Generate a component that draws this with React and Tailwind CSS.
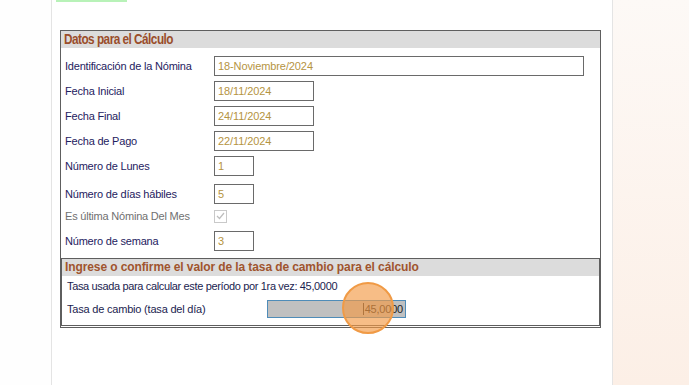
const labelCls = "w-[149px] shrink-0 text-[11px] text-[#1e2160] tracking-[-0.2px]";
const boxCls =
  "h-[20px] border border-[#6a6a6a] bg-white pl-[3px] text-[11px] leading-[18px] text-[#b5943f] tracking-[-0.1px]";

const Row = ({ label, value, width, mt }) => (
  <div className={`flex items-center h-[20px] ${mt}`}>
    <span className={labelCls}>{label}</span>
    <div className={`${boxCls} ${width}`}>{value}</div>
  </div>
);

export default function App() {
  return (
    <div className="relative flex w-[689px] h-[385px] overflow-hidden bg-white font-['Liberation_Sans',Arial,sans-serif]">
      {/* margen izquierdo */}
      <div className="w-[51px] shrink-0 bg-[#fefefe]" />

      {/* panel principal */}
      <div className="w-[562px] shrink-0 border-x border-[#e4e4e4] bg-white">
        <div className="ml-[4px] w-[71px] h-[2px] bg-[#b8f2b8]" />

        <div className="mt-[28px] ml-[8px] w-[541px] border border-[#5e5e5e]">
          <div className="h-[17px] bg-[#dcdcdc] pl-[3px] text-[14px] font-bold leading-[17px] text-[#9a4d2a]">
            <span className="inline-block origin-left scale-x-[0.84] tracking-[-0.6px]">
              Datos para el Cálculo
            </span>
          </div>

          <div className="pl-[4px]">
            <Row label="Identificación de la Nómina" value="18-Noviembre/2024" width="w-[370px]" mt="mt-[8px]" />
            <Row label="Fecha Inicial" value="18/11/2024" width="w-[100px]" mt="mt-[5px]" />
            <Row label="Fecha Final" value="24/11/2024" width="w-[100px]" mt="mt-[5px]" />
            <Row label="Fecha de Pago" value="22/11/2024" width="w-[100px]" mt="mt-[5px]" />
            <Row label="Número de Lunes" value="1" width="w-[40px]" mt="mt-[5px]" />
            <Row label="Número de días hábiles" value="5" width="w-[40px]" mt="mt-[8px]" />
            <div className="flex items-center h-[20px] mt-[2px]">
              <span className="w-[149px] shrink-0 text-[11px] text-[#707070] tracking-[-0.2px]">
                Es última Nómina Del Mes
              </span>
              <div className="flex items-center justify-center w-[13px] h-[13px] border border-[#c9c9c9] bg-white">
                <svg width="9" height="8" viewBox="0 0 9 8" fill="none">
                  <path d="M1 4l2.5 2.5L8 1" stroke="#bdbdbd" strokeWidth="1.2" />
                </svg>
              </div>
            </div>
            <Row label="Número de semana" value="3" width="w-[40px]" mt="mt-[5px]" />
          </div>

          {/* tasa de cambio */}
          <div className="mt-[7px] mb-[1px] border border-[#5e5e5e]">
            <div className="h-[17px] bg-[#dcdcdc] pl-[3px] text-[12px] font-bold leading-[17px] text-[#a0542e] tracking-[-0.1px]">
              Ingrese o confirme el valor de la tasa de cambio para el cálculo
            </div>
            <div className="h-[20px] pl-[5px] text-[11px] leading-[20px] text-[#1b1d50] tracking-[-0.35px]">
              Tasa usada para calcular este período por 1ra vez: 45,0000
            </div>
            <div className="flex items-center mt-[4px] mb-[7px] pl-[5px]">
              <span className="w-[200px] shrink-0 text-[11px] text-[#1b1d50] tracking-[-0.2px]">
                Tasa de cambio (tasa del día)
              </span>
              <div className="flex items-center justify-end w-[139px] h-[18px] border border-[#4f8cb8] bg-[#c0c0c0] pr-[2px] text-[11px] text-[#222] tracking-[-0.2px]">
                <span className="mr-[1px] w-px h-[12px] bg-[#333]" />
                45,0000
              </div>
            </div>
          </div>
        </div>
      </div>

      {/* fondo derecho */}
      <div className="flex-1 bg-gradient-to-b from-[#fdf9f6] to-[#fcefe6]" />

      {/* indicador de clic */}
      <div className="absolute left-[342px] top-[282px] w-[52px] h-[52px] rounded-full border-2 border-[#f09a45] bg-[#f39a45]/65" />
    </div>
  );
}
